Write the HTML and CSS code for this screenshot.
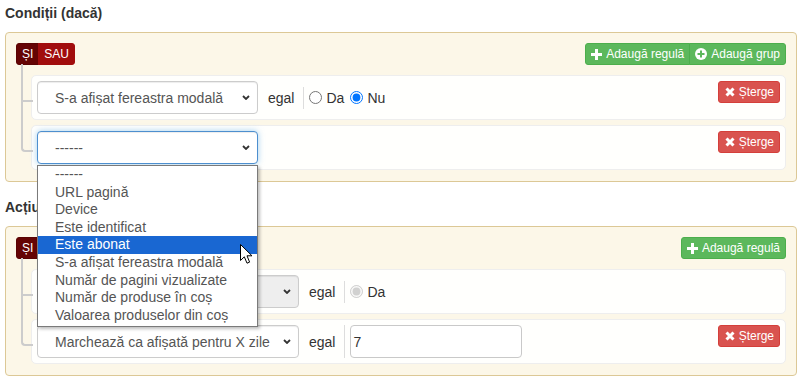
FILE: index.html
```html
<!DOCTYPE html>
<html lang="ro">
    <head>
        <meta charset="UTF-8">
        <meta name="viewport" content="width=device-width, initial-scale=1.0">
        <title>Reguli</title>
        <link rel="stylesheet" href="styles.css">
    </head>
    <body>
        <h4 class="section-title">Condiții (dacă)</h4>
        <div class="group">
            <div class="group-header">
                <div class="btn-group">
                    <span class="btn btn-and">ȘI</span>
                    <span class="btn btn-or">SAU</span>
                </div>
                <div class="btn-group">
                    <span class="btn btn-add">
                        <svg width="11" height="11" viewBox="0 0 11 11"><rect x="4" y="0" width="3" height="11" fill="#fff"/><rect x="0" y="4" width="11" height="3" fill="#fff"/></svg>
                        Adaugă regulă
                    </span>
                    <span class="btn btn-add">
                        <svg width="12" height="12" viewBox="0 0 12 12"><circle cx="6" cy="6" r="6" fill="#fff"/><rect x="5" y="2.5" width="2" height="7" fill="#5cb85c"/><rect x="2.5" y="5" width="7" height="2" fill="#5cb85c"/></svg>
                        Adaugă grup
                    </span>
                </div>
            </div>
            <ul class="rules-list">
                <li class="rule">
                    <div class="rule-fields">
                        <div class="select">
                            <span>S-a afișat fereastra modală</span>
                            <svg width="8" height="5" viewBox="0 0 8 5"><path d="M1 1 L4 4 L7 1" stroke="#333" stroke-width="1.8" fill="none"/></svg>
                        </div>
                        <span class="operator">egal</span>
                        <div class="value">
                            <label><input type="radio" name="r1"> Da</label>
                            <label><input type="radio" name="r1" checked> Nu</label>
                        </div>
                    </div>
                    <span class="btn btn-del">
                        <svg width="10" height="10" viewBox="0 0 10 10"><path d="M1.5 1.5 L8.5 8.5 M8.5 1.5 L1.5 8.5" stroke="#fff" stroke-width="3"/></svg>
                        Șterge
                    </span>
                </li>
                <li class="rule">
                    <div class="rule-fields">
                        <div class="select-wrap">
                            <div class="select focus">
                                <span>------</span>
                                <svg width="8" height="5" viewBox="0 0 8 5"><path d="M1 1 L4 4 L7 1" stroke="#333" stroke-width="1.8" fill="none"/></svg>
                            </div>
                            <ul class="dropdown">
                                <li>------</li>
                                <li>URL pagină</li>
                                <li>Device</li>
                                <li>Este identificat</li>
                                <li class="hover">Este abonat</li>
                                <li>S-a afișat fereastra modală</li>
                                <li>Număr de pagini vizualizate</li>
                                <li>Număr de produse în coș</li>
                                <li>Valoarea produselor din coș</li>
                            </ul>
                            <svg class="cursor" width="13" height="21" viewBox="0 0 13 21"><path d="M0.5 0.5 L0.5 16.5 L4.3 12.8 L7 19.2 L9.6 18.1 L7 11.8 L12 11.8 Z" fill="#fff" stroke="#000" stroke-width="1"/></svg>
                        </div>
                    </div>
                    <span class="btn btn-del">
                        <svg width="10" height="10" viewBox="0 0 10 10"><path d="M1.5 1.5 L8.5 8.5 M8.5 1.5 L1.5 8.5" stroke="#fff" stroke-width="3"/></svg>
                        Șterge
                    </span>
                </li>
            </ul>
        </div>

        <h4 class="section-title second">Acțiuni</h4>
        <div class="group">
            <div class="group-header">
                <div class="btn-group">
                    <span class="btn btn-and joined">ȘI</span>
                </div>
                <div class="btn-group">
                    <span class="btn btn-add">
                        <svg width="11" height="11" viewBox="0 0 11 11"><rect x="4" y="0" width="3" height="11" fill="#fff"/><rect x="0" y="4" width="11" height="3" fill="#fff"/></svg>
                        Adaugă regulă
                    </span>
                </div>
            </div>
            <ul class="rules-list">
                <li class="rule">
                    <div class="rule-fields">
                        <div class="select wide disabled">
                            <span></span>
                            <svg width="8" height="5" viewBox="0 0 8 5"><path d="M1 1 L4 4 L7 1" stroke="#333" stroke-width="1.8" fill="none"/></svg>
                        </div>
                        <span class="operator">egal</span>
                        <div class="value">
                            <label class="muted"><input type="radio" checked disabled> Da</label>
                        </div>
                    </div>
                </li>
                <li class="rule">
                    <div class="rule-fields">
                        <div class="select wide">
                            <span>Marchează ca afișată pentru X zile</span>
                            <svg width="8" height="5" viewBox="0 0 8 5"><path d="M1 1 L4 4 L7 1" stroke="#333" stroke-width="1.8" fill="none"/></svg>
                        </div>
                        <span class="operator">egal</span>
                        <div class="value">
                            <input class="text-input" type="text" value="7">
                        </div>
                    </div>
                    <span class="btn btn-del">
                        <svg width="10" height="10" viewBox="0 0 10 10"><path d="M1.5 1.5 L8.5 8.5 M8.5 1.5 L1.5 8.5" stroke="#fff" stroke-width="3"/></svg>
                        Șterge
                    </span>
                </li>
            </ul>
        </div>
    </body>
</html>
```
FILE: styles.css
```css
* {
    box-sizing: border-box;
}
body {
    margin: 0;
    padding: 3px 11px 0 5px;
    font-family: "Liberation Sans", Arial, sans-serif;
    font-size: 14px;
    color: #333;
    background: #fff;
}
.section-title {
    margin: 0 0 9px;
    font-size: 14px;
    line-height: 20px;
    font-weight: bold;
}
.section-title.second {
    margin-top: 15px;
}

/* groups */
.group {
    padding: 10px 10px 11px;
    border: 1px solid #dcc896;
    border-radius: 4px;
    background: rgba(250, 240, 210, .5);
}
.group-header {
    display: flex;
    justify-content: space-between;
    height: 22px;
}
.btn-group {
    display: flex;
}
.btn {
    display: inline-flex;
    align-items: center;
    gap: 4px;
    height: 22px;
    padding: 0 5px;
    font-size: 12px;
    line-height: 18px;
    color: #fff;
    border: 1px solid transparent;
    border-radius: 3px;
    white-space: nowrap;
}
.btn-group .btn + .btn {
    border-top-left-radius: 0;
    border-bottom-left-radius: 0;
    margin-left: -1px;
}
.btn-group .btn:not(:last-child),
.btn.joined {
    border-top-right-radius: 0;
    border-bottom-right-radius: 0;
}
.btn-and {
    background: #650404;
    border-color: #5a0303;
}
.btn-or {
    background: #a10d0d;
    border-color: #a10d0d;
}
.btn-add {
    background: #5cb85c;
    border-color: #4cae4c;
}
.btn-del {
    background: #d9534f;
    border-color: #d43f3a;
    padding: 0 5px 0 6px;
}

/* rules */
.rules-list {
    list-style: none;
    margin: 10px 0 0;
    padding: 0 0 0 15px;
    display: flex;
    flex-direction: column;
    gap: 5px;
}
.rule {
    position: relative;
    display: flex;
    justify-content: space-between;
    align-items: flex-start;
    padding: 5px;
    border: 1px solid #eee;
    border-radius: 5px;
    background: rgba(255, 255, 255, .9);
}
.rule::before,
.rule::after {
    content: '';
    position: absolute;
    left: -11px;
    width: 10px;
    border-color: #ccc;
    border-style: solid;
}
.rule::before {
    top: -6px;
    height: calc(50% + 8px);
    border-width: 0 0 2px 2px;
}
.rule::after {
    top: 50%;
    height: calc(50% + 8px);
    border-width: 0 0 0 2px;
}
.rule:first-child::before {
    top: -12px;
    height: calc(50% + 14px);
}
.rule:last-child::before {
    border-radius: 0 0 0 4px;
}
.rule:last-child::after {
    display: none;
}
.rule-fields {
    display: flex;
    align-items: center;
}
.select-wrap {
    position: relative;
}
.select {
    display: flex;
    justify-content: space-between;
    align-items: center;
    width: 221px;
    height: 33px;
    padding: 0 7px 0 17px;
    border: 1px solid #ccc;
    border-radius: 4px;
    background: #fff;
    color: #555;
    box-shadow: inset 0 1px 1px rgba(0, 0, 0, .075);
}
.select.wide {
    width: 262px;
}
.select.disabled {
    background: #eee;
}
.select.focus {
    border-color: #4d8fcf;
    box-shadow: inset 0 1px 1px rgba(0, 0, 0, .075), 0 0 6px rgba(102, 175, 233, .6);
}
.operator {
    margin-left: 10px;
}
.value {
    display: flex;
    align-items: center;
    gap: 6px;
    min-height: 22px;
    margin-left: 9px;
    padding-left: 5px;
    border-left: 1px solid #ddd;
}
.value label {
    display: flex;
    align-items: center;
    gap: 4px;
}
.value input[type="radio"] {
    margin: 0;
    width: 13px;
    height: 13px;
}
.text-input {
    width: 172px;
    height: 33px;
    padding: 0 2px;
    border: 1px solid #c9c9c9;
    border-radius: 4px;
    font-family: inherit;
    font-size: 14px;
    color: #333;
}

/* open select list */
.dropdown {
    position: absolute;
    top: 100%;
    left: 0;
    z-index: 10;
    width: 221px;
    margin: 1px 0 0;
    padding: 0 0 2px;
    list-style: none;
    background: #fff;
    border: 1px solid #7a7a7a;
    box-shadow: 2px 2px 3px rgba(0, 0, 0, .25);
}
.dropdown li {
    height: 17.6px;
    line-height: 17.6px;
    padding-left: 17px;
    color: #555;
    white-space: nowrap;
}
.dropdown li.hover {
    background: #1967d2;
    color: #fff;
}
.cursor {
    position: absolute;
    left: 203px;
    top: 113px;
    z-index: 11;
}
```
